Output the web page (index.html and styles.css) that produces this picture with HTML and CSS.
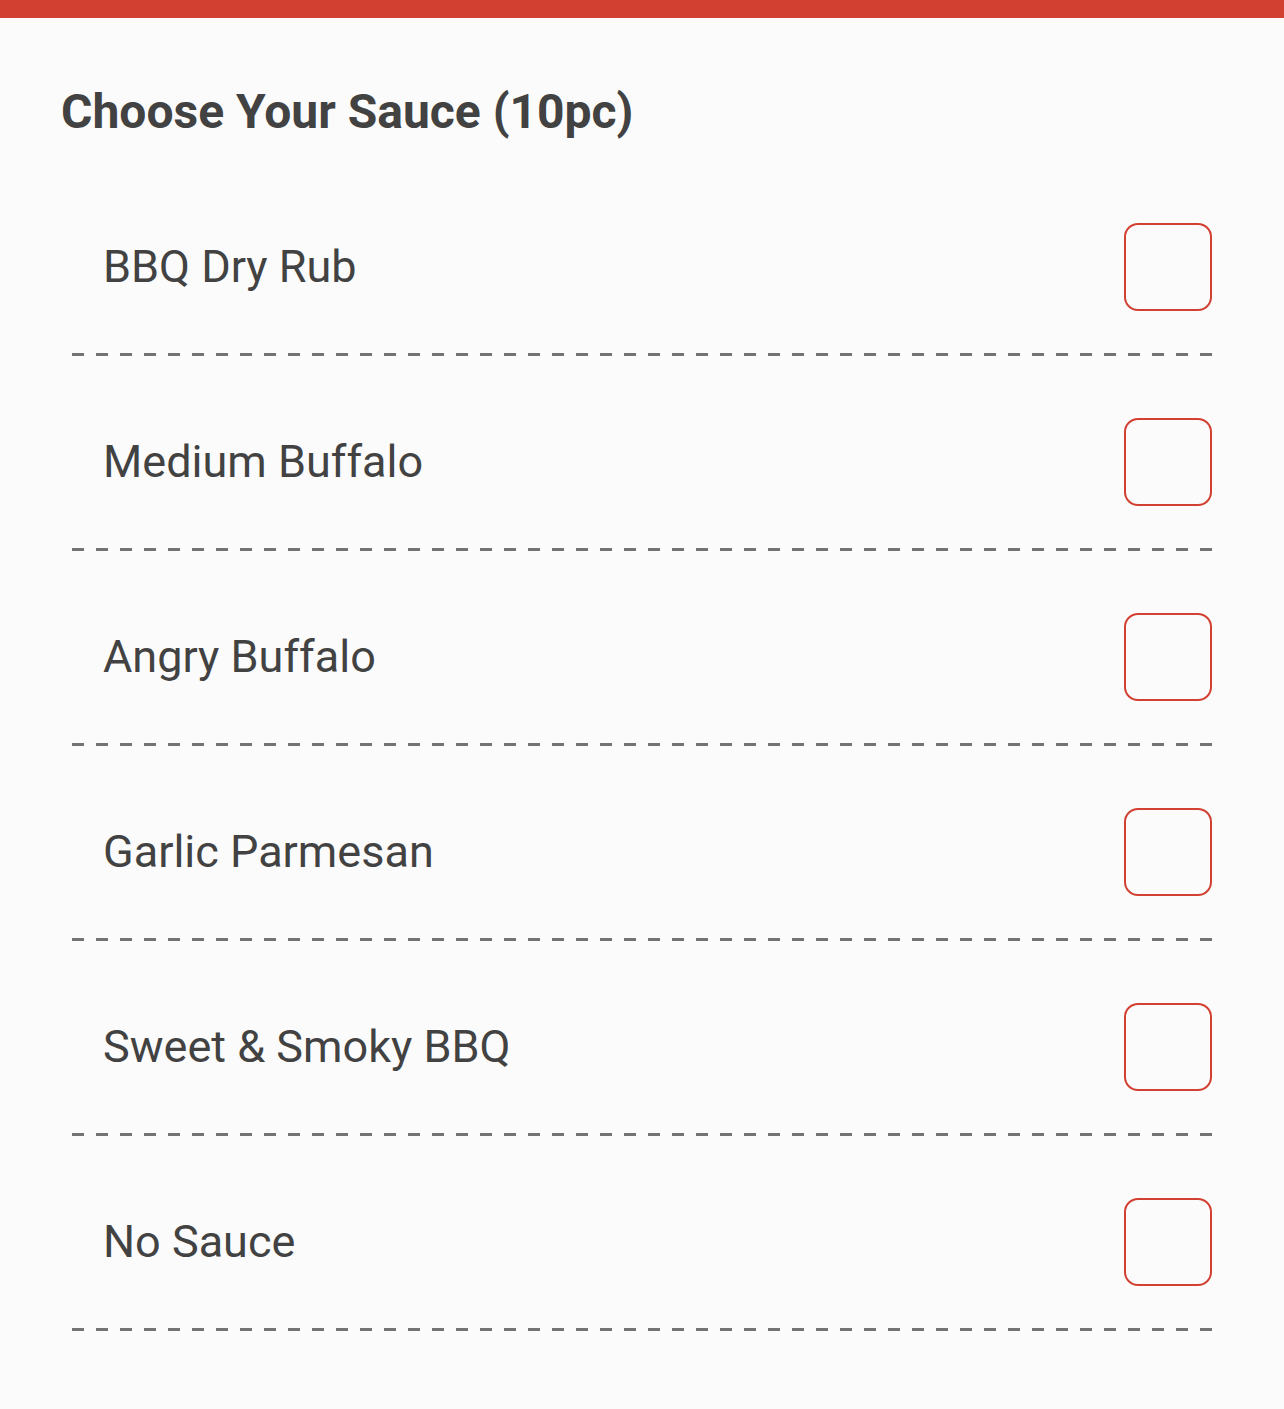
FILE: index.html
```html
<!DOCTYPE html>
<html lang="en">
<head>
  <meta charset="UTF-8" />
  <meta name="viewport" content="width=device-width, initial-scale=1" />
  <title>Choose Your Sauce</title>
  <link rel="stylesheet" href="styles.css">
</head>
<body>

  <div class="topbar"></div>

  <div class="picker">
    <h2 class="picker-title">Choose Your Sauce (10pc)</h2>

    <ul class="options">
      <li class="option">
        <label>
          <span class="option-name">BBQ Dry Rub</span>
          <input type="checkbox" class="check" name="sauce" value="bbq-dry-rub">
        </label>
      </li>
      <li class="option">
        <label>
          <span class="option-name">Medium Buffalo</span>
          <input type="checkbox" class="check" name="sauce" value="medium-buffalo">
        </label>
      </li>
      <li class="option">
        <label>
          <span class="option-name">Angry Buffalo</span>
          <input type="checkbox" class="check" name="sauce" value="angry-buffalo">
        </label>
      </li>
      <li class="option">
        <label>
          <span class="option-name">Garlic Parmesan</span>
          <input type="checkbox" class="check" name="sauce" value="garlic-parmesan">
        </label>
      </li>
      <li class="option">
        <label>
          <span class="option-name">Sweet &amp; Smoky BBQ</span>
          <input type="checkbox" class="check" name="sauce" value="sweet-smoky-bbq">
        </label>
      </li>
      <li class="option">
        <label>
          <span class="option-name">No Sauce</span>
          <input type="checkbox" class="check" name="sauce" value="none">
        </label>
      </li>
    </ul>
  </div>

</body>
</html>
```

FILE: styles.css
```css
body {
  margin: 0;
  padding: 0;
  font-family: Roboto, "Noto Sans", Arial, sans-serif;
  background: #fbfbfb;
  color: #424242;
}

.topbar {
  height: 18px;
  background: #d14030;
}

.picker {
  padding: 0 72px 0 61px;
}

.picker-title {
  margin: 0;
  padding: 66px 0 21px;
  font-size: 48px;
  font-weight: 700;
  line-height: 56px;
  color: #424242;
}

/* === Lista de molhos === */
.options {
  list-style: none;
  margin: 0;
  padding: 0 0 0 11px;
}

.option {
  padding: 62px 0 45px 31px;
  background-image: repeating-linear-gradient(to right, #737373 0 12px, transparent 12px 24px);
  background-size: 100% 3px;
  background-position: left bottom;
  background-repeat: no-repeat;
}

.option label {
  display: flex;
  align-items: center;
  justify-content: space-between;
  cursor: pointer;
}

.option-name {
  font-size: 45px;
  line-height: 88px;
}

.check {
  appearance: none;
  -webkit-appearance: none;
  margin: 0;
  width: 88px;
  height: 88px;
  border: 2px solid #d14030;
  border-radius: 14px;
  background: transparent;
  cursor: pointer;
}

.check:checked {
  background: #d14030;
}
```
